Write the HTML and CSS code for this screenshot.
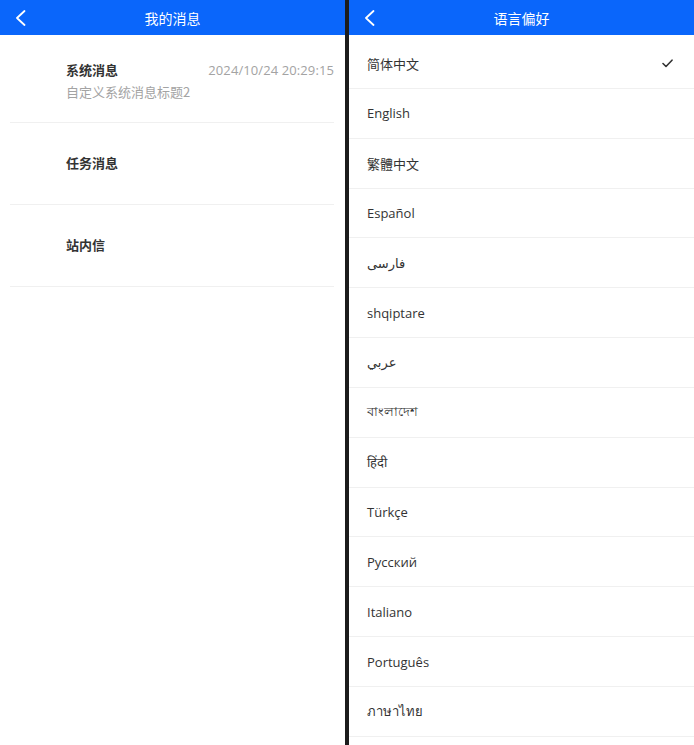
FILE: index.html
```html
<!DOCTYPE html>
<html lang="zh-CN">
<head>
  <meta charset="UTF-8" />
  <meta name="viewport" content="width=device-width, initial-scale=1.0" />
  <title>消息 / 语言偏好</title>
  <link rel="stylesheet" href="styles.css">
</head>
<body>
  <div class="screens">
    <!-- 我的消息 -->
    <div class="panel">
      <header class="nav-bar">
        <span class="back">
          <svg width="10" height="16" viewBox="0 0 10 16"><polyline points="8.5,1 1,8 8.5,15" fill="none" stroke="#fff" stroke-width="1.8" stroke-linecap="round" stroke-linejoin="round"/></svg>
        </span>
        <h1>我的消息</h1>
      </header>

      <ul class="msg-list">
        <li class="msg-item">
          <div class="avatar"></div>
          <div class="msg-body">
            <div class="msg-top">
              <span class="msg-title">系统消息</span>
              <span class="msg-time">2024/10/24 20:29:15</span>
            </div>
            <div class="msg-desc">自定义系统消息标题2</div>
          </div>
        </li>
        <li class="msg-item">
          <div class="avatar"></div>
          <div class="msg-body">
            <div class="msg-top">
              <span class="msg-title">任务消息</span>
            </div>
          </div>
        </li>
        <li class="msg-item">
          <div class="avatar"></div>
          <div class="msg-body">
            <div class="msg-top">
              <span class="msg-title">站内信</span>
            </div>
          </div>
        </li>
      </ul>
    </div>

    <div class="split"></div>

    <!-- 语言偏好 -->
    <div class="panel">
      <header class="nav-bar">
        <span class="back">
          <svg width="10" height="16" viewBox="0 0 10 16"><polyline points="8.5,1 1,8 8.5,15" fill="none" stroke="#fff" stroke-width="1.8" stroke-linecap="round" stroke-linejoin="round"/></svg>
        </span>
        <h1>语言偏好</h1>
      </header>

      <ul class="lang-list">
        <li class="lang-item active">
          <span>简体中文</span>
          <svg class="check" width="11" height="9" viewBox="0 0 11 9"><polyline points="1,4.5 4,7.5 10,1.2" fill="none" stroke="#333" stroke-width="1.6" stroke-linecap="round" stroke-linejoin="round"/></svg>
        </li>
        <li class="lang-item"><span>English</span></li>
        <li class="lang-item"><span>繁體中文</span></li>
        <li class="lang-item"><span>Español</span></li>
        <li class="lang-item"><span>فارسی</span></li>
        <li class="lang-item"><span>shqiptare</span></li>
        <li class="lang-item"><span>عربي</span></li>
        <li class="lang-item"><span>বাংলাদেশ</span></li>
        <li class="lang-item"><span>हिंदी</span></li>
        <li class="lang-item"><span>Türkçe</span></li>
        <li class="lang-item"><span>Русский</span></li>
        <li class="lang-item"><span>Italiano</span></li>
        <li class="lang-item"><span>Português</span></li>
        <li class="lang-item"><span>ภาษาไทย</span></li>
      </ul>
    </div>
  </div>
</body>
</html>
```

FILE: styles.css
```css
body {
  margin: 0;
  font-family: "Open Sans", "Noto Sans CJK SC", "DejaVu Sans", sans-serif;
  color: #333;
  background: #fff;
}

ul {
  list-style: none;
  margin: 0;
  padding: 0;
}

.screens {
  display: flex;
  width: 694px;
  height: 745px;
  overflow: hidden;
}

.panel {
  width: 345px;
  flex-shrink: 0;
  background: #fff;
}

.split {
  width: 4px;
  flex-shrink: 0;
  background: #1c1c1c;
}

.nav-bar {
  position: relative;
  height: 35px;
  background-color: #0a66fb;
  display: flex;
  align-items: center;
  justify-content: center;
}

.nav-bar h1 {
  margin: 0;
  font-size: 14px;
  font-weight: 400;
  color: #fff;
  font-family: "Noto Sans CJK SC", sans-serif;
}

.back {
  position: absolute;
  left: 16px;
  top: 10px;
  display: flex;
}

/* message list */
.msg-list {
  margin: 6px 11px 0 10px;
}

.msg-item {
  height: 81px;
  display: flex;
  align-items: center;
  border-bottom: 1px solid #f0f0f0;
}

.avatar {
  width: 44px;
  height: 44px;
  margin-right: 12px;
  flex-shrink: 0;
}

.msg-body {
  flex: 1;
  min-width: 0;
  margin-top: -2px;
}

.msg-top {
  display: flex;
  justify-content: space-between;
  align-items: center;
  height: 22px;
}

.msg-title {
  font-family: "Noto Sans CJK SC", sans-serif;
  font-size: 13px;
  font-weight: 700;
  color: #333;
}

.msg-time {
  font-size: 13px;
  letter-spacing: 0.1px;
  color: #a3a3a3;
}

.msg-desc {
  font-family: "Noto Sans CJK SC", sans-serif;
  height: 22px;
  line-height: 22px;
  font-size: 13px;
  color: #a3a3a3;
}

/* language list */
.lang-list {
  margin-top: 4px;
}

.lang-item {
  height: 48.85px;
  padding: 0 21px 0 18px;
  display: flex;
  align-items: center;
  justify-content: space-between;
  border-bottom: 1px solid #f0f0f0;
  font-size: 13px;
  color: #333;
}

.check {
  display: block;
}
```
